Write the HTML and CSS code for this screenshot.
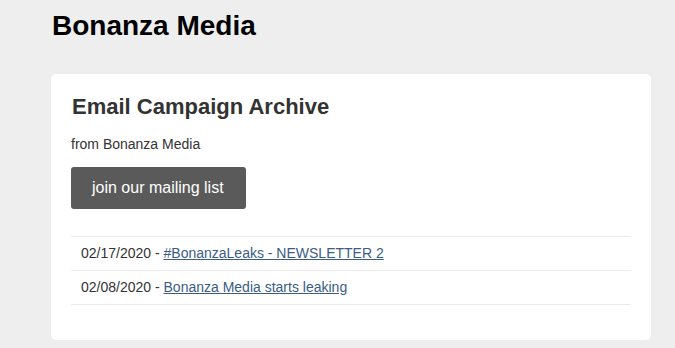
FILE: index.html
```html
<!DOCTYPE html>
<html lang="en">
<head>
  <meta charset="UTF-8" />
  <title>Bonanza Media - Email Campaign Archive</title>
  <link rel="stylesheet" href="styles.css">
</head>
<body>
  <div class="wrapper">
    <h1 class="site-title">Bonanza Media</h1>

    <div class="archive-card">
      <h2 class="archive-title">Email Campaign Archive</h2>
      <p class="archive-from">from Bonanza Media</p>
      <a class="join-button" href="#">join our mailing list</a>

      <ul class="campaign-list">
        <li class="campaign">02/17/2020 - <a href="#">#BonanzaLeaks - NEWSLETTER 2</a></li>
        <li class="campaign">02/08/2020 - <a href="#">Bonanza Media starts leaking</a></li>
      </ul>
    </div>
  </div>
</body>
</html>
```

FILE: styles.css
```css
* {
  box-sizing: border-box;
}

body {
  margin: 0;
  background: #eeeeee;
  font-family: "Liberation Sans", Arial, sans-serif;
  color: #333;
}

.wrapper {
  width: 600px;
  margin-left: 51px;
  padding-top: 10px;
}

.site-title {
  margin: 0 0 32px 1px;
  font-size: 28px;
  font-weight: bold;
  color: #000;
}

.archive-card {
  background: #fff;
  border-radius: 5px;
  padding: 20px 20px 21px;
}

.archive-title {
  margin: 0 0 16px 1px;
  font-size: 22px;
  font-weight: bold;
  color: #333;
}

.archive-from {
  margin: 0 0 15px;
  font-size: 14px;
  line-height: 16px;
}

.join-button {
  display: inline-block;
  background: #5a5a5a;
  color: #fff;
  font-size: 16px;
  line-height: 18px;
  padding: 12px 22px 12px 21px;
  border-radius: 3px;
  text-decoration: none;
}

.campaign-list {
  list-style: none;
  margin: 27px 0 14px;
  padding: 0;
  border-bottom: 1px solid #ebebeb;
}

.campaign {
  border-top: 1px solid #ebebeb;
  padding: 8px 10px 9px;
  font-size: 14px;
  line-height: 16px;
}

.campaign a {
  color: #3b5c85;
  text-decoration: underline;
}
```
